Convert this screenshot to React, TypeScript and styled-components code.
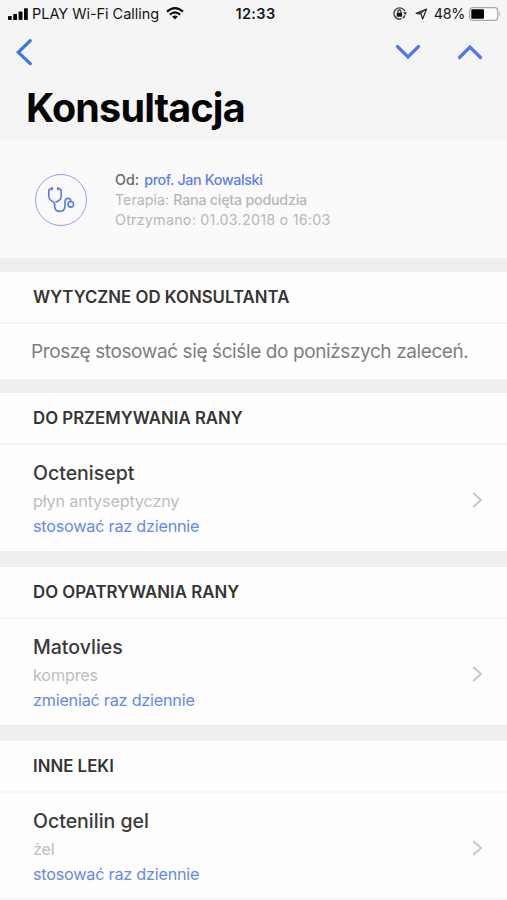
import React from "react";
import styled, { createGlobalStyle } from "styled-components";

const Global = createGlobalStyle`
  * { box-sizing: border-box; }
  body { margin: 0; background: #fff; font-family: Inter, "Liberation Sans", sans-serif; overflow: hidden; }
  h1, h2, h3, p { margin: 0; font-weight: inherit; }
`;

const Screen = styled.div`
  width: 507px;
  height: 900px;
  display: flex;
  flex-direction: column;
  background: #fefefe;
  overflow: hidden;
  white-space: nowrap;
`;

const Header = styled.header`
  height: 140px;
  flex: none;
  background: #f5f5f5;
`;

const StatusBar = styled.div`
  height: 27px;
  display: grid;
  grid-template-columns: 1fr auto 1fr;
  align-items: center;
  padding: 0 6px 0 8px;
  color: #161616;
`;

const StatusGroup = styled.div<{ $end?: boolean }>`
  display: flex;
  align-items: center;
  justify-content: ${(p) => (p.$end ? "flex-end" : "flex-start")};
`;

const Label = styled.span<{ $size: number; $weight?: number; $spacing?: number; $color?: string; $ml?: number }>`
  font-size: ${(p) => p.$size}px;
  font-weight: ${(p) => p.$weight ?? 400};
  letter-spacing: ${(p) => p.$spacing ?? 0}px;
  margin-left: ${(p) => p.$ml ?? 0}px;
  color: ${(p) => p.$color ?? "inherit"};
`;

const Icon = styled.svg<{ $ml?: number }>`
  display: block;
  flex: none;
  margin-left: ${(p) => p.$ml ?? 0}px;
`;

const NavBar = styled.nav`
  height: 49px;
  display: flex;
  align-items: center;
  padding: 0 23px 0 15px;
  gap: 34px;
`;

const IconButton = styled.button`
  border: 0;
  padding: 0;
  background: none;
  &:first-child { margin-right: auto; }
`;

const Title = styled.h1`
  padding-left: 26px;
  line-height: 64px;
  font-size: 39.5px;
  font-weight: 700;
  letter-spacing: -0.85px;
  color: #050505;
`;

const Sender = styled.section`
  height: 118px;
  flex: none;
  display: flex;
  align-items: center;
  gap: 28px;
  padding: 2px 0 0 35px;
  background: #fafafa;
`;

const Avatar = styled.div`
  width: 52px;
  height: 52px;
  border: 1.5px solid #8da5f5;
  border-radius: 50%;
  display: grid;
  place-items: center;
`;

const Meta = styled.div`
  display: flex;
  flex-direction: column;
  color: #b8b8b8;
`;

const MetaRow = styled.div`
  display: flex;
  height: 20px;
  line-height: 20px;
`;

const Divider = styled.div<{ $height: number }>`
  height: ${(p) => p.$height}px;
  flex: none;
  background: #eeeeee;
`;

const SectionTitle = styled.h2`
  flex: none;
  height: 52px;
  padding-left: 33px;
  line-height: 50px;
  border-bottom: 2px solid #f5f5f5;
  font-size: 16.8px;
  font-weight: 580;
  letter-spacing: 0.02px;
  color: #353535;
`;

const Note = styled.p`
  flex: none;
  height: 55px;
  padding-left: 31px;
  line-height: 56px;
  font-size: 19px;
  letter-spacing: -0.4px;
  color: #7e7e7e;
`;

const Item = styled.div<{ $height: number }>`
  flex: none;
  height: ${(p) => p.$height}px;
  display: flex;
  justify-content: space-between;
  padding: 15px 24px 0 33px;
`;

const ItemText = styled.div`
  display: flex;
  flex-direction: column;
`;

const ItemName = styled.h3`
  font-size: 19.5px;
  line-height: 26px;
  font-weight: 460;
  letter-spacing: 0;
  color: #3a3a3a;
`;

const ItemLine = styled.p<{ $accent?: boolean }>`
  font-size: 16.2px;
  line-height: ${(p) => (p.$accent ? 19 : 31)}px;
  letter-spacing: ${(p) => (p.$accent ? -0.22 : -0.16)}px;
  color: ${(p) => (p.$accent ? "#6488ec" : "#bdbdbd")};
`;

const EndLine = styled.div`
  height: 2px;
  flex: none;
  background: #f5f5f5;
`;

const SignalIcon = () => (
  <Icon width="21" height="12" viewBox="0 0 21 12" fill="#050505">
    <rect x="0" y="8" width="3.8" height="4" rx="0.8" />
    <rect x="5.2" y="6" width="3.9" height="6" rx="0.8" />
    <rect x="10.6" y="3.4" width="3.9" height="8.6" rx="0.8" />
    <rect x="16" y="0.2" width="3.8" height="11.8" rx="0.8" />
  </Icon>
);

const WifiIcon = () => (
  <Icon $ml={7} width="18" height="13" viewBox="0 0 18 13" fill="none" stroke="#0a0a0a" strokeWidth="2.2">
    <path d="M1 4.7Q9-2.3 17 4.7" />
    <path d="M3.8 7.7Q9 3.2 14.2 7.7" />
    <path d="M6.1 9.6Q9 7.3 11.9 9.6L9 12.5Z" fill="#0a0a0a" stroke="none" />
  </Icon>
);

const RotationLockIcon = () => (
  <Icon width="14" height="13" viewBox="0 0 14 13" fill="none" stroke="#333" strokeWidth="1.3">
    <path d="M11.7 4.2A5.6 5.6 0 1 0 8.5 11.7M9.6 11.2A5.6 5.6 0 0 0 11.9 8.2" />
    <path d="M10.2 5.2H14L12.2 8Z" fill="#222" stroke="none" />
    <rect x="3.7" y="5.7" width="5.4" height="4" rx=".4" fill="#111" stroke="none" />
    <path d="M4.9 6V4.5A1.5 1.5 0 0 1 7.9 4.5V6" />
  </Icon>
);

const LocationIcon = () => (
  <Icon $ml={8} width="13" height="12" viewBox="0 0 13 12" fill="none" stroke="#222" strokeWidth="1.2" strokeLinejoin="round">
    <path d="M11.6 1L1.2 5.4L6.1 6.1L7.6 11Z" />
    <path d="M11.6 1L1.2 5.4L6.1 6.1Z" fill="#444" stroke="none" />
  </Icon>
);

const BatteryIcon = () => (
  <Icon $ml={4} width="32" height="14" viewBox="0 0 32 14">
    <rect x=".7" y=".7" width="28" height="12.6" rx="3" fill="#fafafa" stroke="#aaa" strokeWidth="1.3" />
    <rect x="2.3" y="2.3" width="12.7" height="9.4" rx="1" fill="#050505" />
    <path d="M30.2 4.8Q32 7 30.2 9.2Z" fill="#999" />
  </Icon>
);

const StethoscopeIcon = () => (
  <Icon width="28" height="26" viewBox="0 0 28 26" fill="none" stroke="#557bea" strokeWidth="1.6" strokeLinecap="round" strokeLinejoin="round">
    <path d="M5 1.7H4.3Q1.8 1.7 1.8 4.2V9.5Q1.8 12 4.2 13.6Q7.7 15.4 7.7 17.5V19.2C7.7 22.8 10.2 24.4 12.9 24.4C16 24.4 18 22 18 18.5V15.2C18 12.7 19.2 11.4 21 11.4C23 11.4 23.8 12.8 23.8 14.4" />
    <path d="M10.9 1.7H11.7Q14.2 1.7 14.2 4.2V9.5Q14.2 11.8 12.4 13.2Q10.8 14.5 9 14.9" />
    <path d="M5 1.2V2.2M10.9 1.2V2.2" strokeWidth="2.2" />
    <circle cx="23.8" cy="17.3" r="2.8" />
  </Icon>
);

const ItemChevron = () => (
  <Icon width="11" height="16" viewBox="0 0 11 16" fill="none" stroke="#c4c4c4" strokeWidth="1.8">
    <path d="M1.2 1L9 8L1.2 15" />
  </Icon>
);

const ChevronSlot = styled.div`
  padding-top: 32px;
`;

type Drug = {
  heading: string;
  name: string;
  kind: string;
  dose: string;
  gap: number;
  height: number;
};

const drugs: Drug[] = [
  { gap: 14, heading: "DO PRZEMYWANIA RANY", name: "Octenisept", kind: "płyn antyseptyczny", dose: "stosować raz dziennie", height: 106 },
  { gap: 16, heading: "DO OPATRYWANIA RANY", name: "Matovlies", kind: "kompres", dose: "zmieniać raz dziennie", height: 106 },
  { gap: 16, heading: "INNE LEKI", name: "Octenilin gel", kind: "żel", dose: "stosować raz dziennie", height: 105 },
];

export default function App() {
  return (
    <Screen>
      <Global />
      <Header>
        <StatusBar>
          <StatusGroup>
            <SignalIcon />
            <Label $size={14.5} $spacing={-0.03} $ml={3}>PLAY Wi-Fi Calling</Label>
            <WifiIcon />
          </StatusGroup>
          <Label $size={14.5} $weight={600} $spacing={0.35} $ml={2}>12:33</Label>
          <StatusGroup $end>
            <RotationLockIcon />
            <LocationIcon />
            <Label $size={14.3} $ml={6} $spacing={-0.3}>48%</Label>
            <BatteryIcon />
          </StatusGroup>
        </StatusBar>
        <NavBar>
          <IconButton aria-label="Wstecz">
            <Icon width="18" height="28" viewBox="0 0 18 28" fill="none" stroke="#3478e8" strokeWidth="3.2" strokeLinecap="round">
              <path d="M15.3 2.7L3.3 14.3L15.3 25.7" />
            </Icon>
          </IconButton>
          <IconButton aria-label="Następna">
            <Icon width="28" height="18" viewBox="0 0 28 18" fill="none" stroke="#4f78ec" strokeWidth="3.2" strokeLinecap="round">
              <path d="M3.5 3.5L14 14L24.5 3.5" />
            </Icon>
          </IconButton>
          <IconButton aria-label="Poprzednia">
            <Icon width="28" height="18" viewBox="0 0 28 18" fill="none" stroke="#4f78ec" strokeWidth="3.2" strokeLinecap="round">
              <path d="M3.5 14.5L14 4L24.5 14.5" />
            </Icon>
          </IconButton>
        </NavBar>
        <Title>Konsultacja</Title>
      </Header>
      <Sender>
        <Avatar><StethoscopeIcon /></Avatar>
        <Meta>
          <MetaRow>
            <Label $size={14.3} $weight={500} $color="#686868">Od:</Label>
            <Label $size={14.3} $weight={500} $spacing={-0.35} $ml={5} $color="#5b80ee">prof. Jan Kowalski</Label>
          </MetaRow>
          <MetaRow>
            <Label $size={14.3}>Terapia:</Label>
            <Label $size={14.3} $weight={500} $spacing={-0.25} $ml={4}>Rana cięta podudzia</Label>
          </MetaRow>
          <MetaRow>
            <Label $size={14.3} $spacing={0.24}>Otrzymano: 01.03.2018 o 16:03</Label>
          </MetaRow>
        </Meta>
      </Sender>
      <Divider $height={14} />
      <SectionTitle>WYTYCZNE OD KONSULTANTA</SectionTitle>
      <Note>Proszę stosować się ściśle do poniższych zaleceń.</Note>
      {drugs.map((d) => (
        <React.Fragment key={d.heading}>
          <Divider $height={d.gap} />
          <SectionTitle>{d.heading}</SectionTitle>
          <Item $height={d.height}>
            <ItemText>
              <ItemName>{d.name}</ItemName>
              <ItemLine>{d.kind}</ItemLine>
              <ItemLine $accent>{d.dose}</ItemLine>
            </ItemText>
            <ChevronSlot><ItemChevron /></ChevronSlot>
          </Item>
        </React.Fragment>
      ))}
      <EndLine />
    </Screen>
  );
}
